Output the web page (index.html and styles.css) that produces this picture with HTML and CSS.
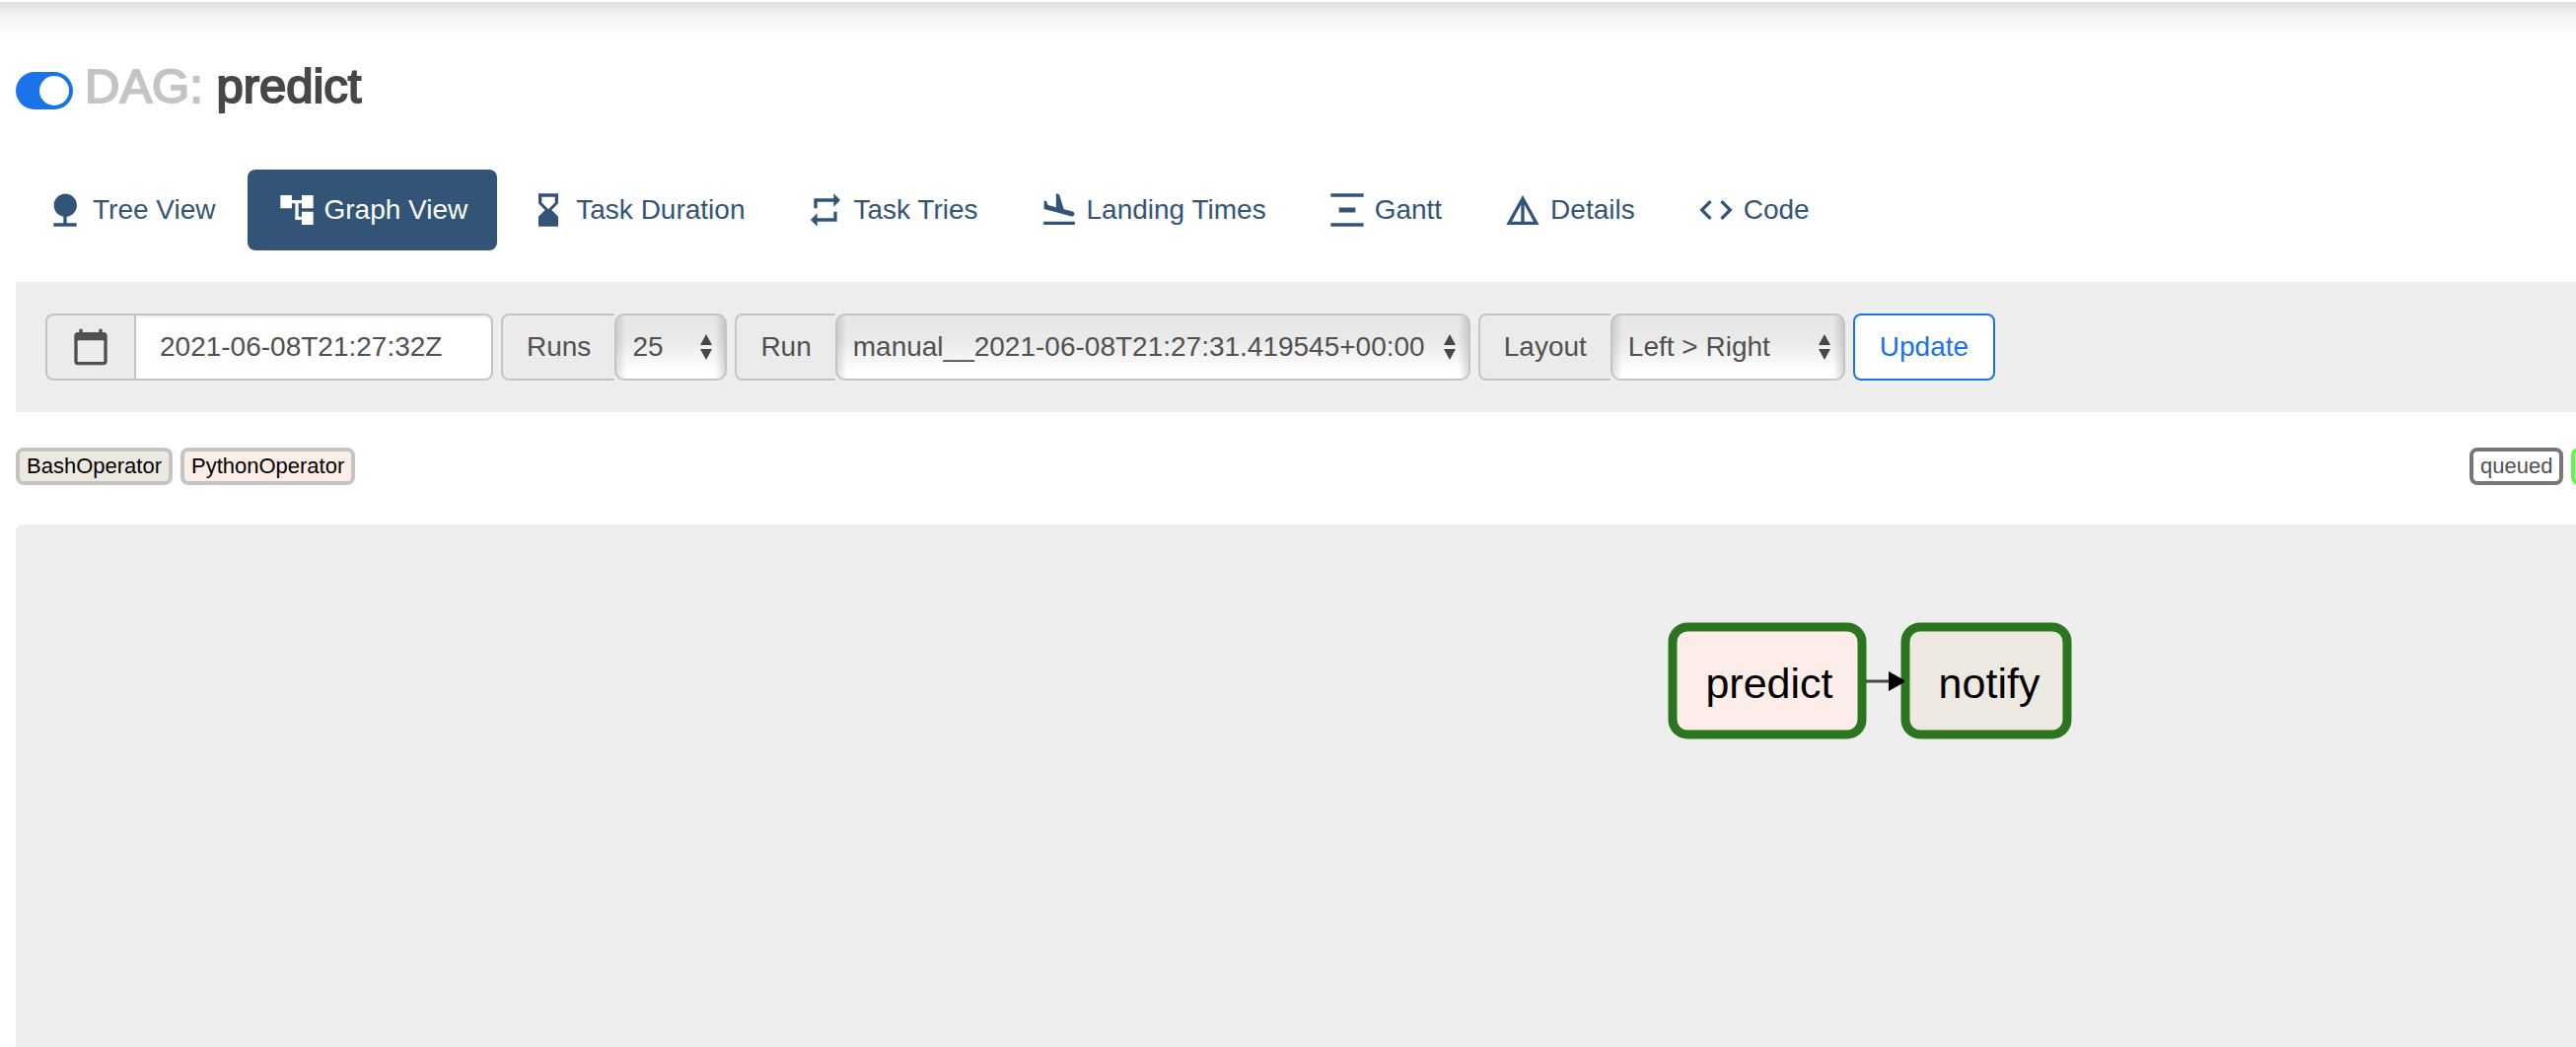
FILE: index.html
```html
<!DOCTYPE html>
<html lang="en">
<head>
<meta charset="utf-8">
<title>predict - Graph View</title>
<link rel="stylesheet" href="styles.css">
</head>
<body>
<div class="top-shadow"></div>
<main class="page">
  <header class="dag-header">
    <input class="toggle" type="checkbox" id="paused" aria-label="DAG enabled" checked>
    <h1 class="dag-title"><span class="muted">DAG:</span> predict</h1>
  </header>

  <nav class="tabs">
    <a class="tab" href="#tree"><svg class="icon" viewBox="0 0 24 24"><path d="M13 16.12c3.47-.41 6.17-3.36 6.17-6.95 0-3.87-3.13-7-7-7s-7 3.13-7 7c0 3.47 2.52 6.34 5.83 6.89V20H5v2h14v-2h-6v-3.88z"/></svg>Tree View</a>
    <a class="tab active" href="#graph"><svg class="icon" viewBox="0 0 24 24"><path d="M22 11V3h-7v3H9V3H2v8h7V8h2v10h4v3h7v-8h-7v3h-2V8h2v3z"/></svg>Graph View</a>
    <a class="tab" href="#duration"><svg class="icon" viewBox="0 0 24 24"><path fill-rule="evenodd" d="M18 22l-.01-6L14 12l3.99-4.01L18 2H6v6l4 4-4 3.99V22h12zM8 7.5V4h8v3.5l-4 4-4-4z"/></svg>Task Duration</a>
    <a class="tab" href="#tries"><svg class="icon" viewBox="0 0 24 24"><path d="M7 7h10v3l4-4-4-4v3H5v6h2V7zm10 10H7v-3l-4 4 4 4v-3h12v-6h-2v4z"/></svg>Task Tries</a>
    <a class="tab" href="#landing"><svg class="icon" viewBox="0 0 24 24"><path d="M2.5 19h19v2h-19v-2zm7.18-5.73l4.35 1.16 5.31 1.42c.8.21 1.62-.26 1.84-1.06.21-.8-.26-1.62-1.06-1.84l-5.31-1.42-2.76-9.02L10.12 2v8.28L5.15 8.95l-.93-2.32-1.45-.39v5.17l1.6.43 5.31 1.43z"/></svg>Landing Times</a>
    <a class="tab" href="#gantt"><svg class="icon" viewBox="0 0 24 24"><path d="M22 2v2H2V2h20zM7 10.5v3h10v-3H7zM2 20v2h20v-2H2z"/></svg>Gantt</a>
    <a class="tab" href="#details"><svg class="icon" viewBox="0 0 24 24"><path d="M12 3L2 21h20L12 3zm1 5.92L18.6 19H13V8.92zm-2 0V19H5.4L11 8.92z"/></svg>Details</a>
    <a class="tab" href="#code"><svg class="icon" viewBox="0 0 24 24"><path d="M9.4 16.6L4.8 12l4.6-4.6L8 6l-6 6 6 6 1.4-1.4zm5.2 0l4.6-4.6-4.6-4.6L16 6l6 6-6 6-1.4-1.4z"/></svg>Code</a>
  </nav>

  <form class="filters">
    <div class="group">
      <label class="addon addon-icon" for="base-date" aria-label="Base date"><svg class="icon" viewBox="0 0 24 24"><path d="M20 3h-1V1h-2v2H7V1H5v2H4c-1.1 0-2 .9-2 2v16c0 1.1.9 2 2 2h16c1.1 0 2-.9 2-2V5c0-1.1-.9-2-2-2zm0 18H4V8h16v13z"/></svg></label>
      <input class="date" id="base-date" type="text" value="2021-06-08T21:27:32Z">
    </div>
    <div class="group">
      <label class="addon" for="runs">Runs</label>
      <span class="picker picker-runs"><select id="runs"><option>25</option></select><svg class="arrows" viewBox="0 0 14 26"><path d="M7 0l6 11H1zM7 26l6-11H1z"/></svg></span>
    </div>
    <div class="group">
      <label class="addon" for="run">Run</label>
      <span class="picker picker-run"><select id="run"><option>manual__2021-06-08T21:27:31.419545+00:00</option></select><svg class="arrows" viewBox="0 0 14 26"><path d="M7 0l6 11H1zM7 26l6-11H1z"/></svg></span>
    </div>
    <div class="group">
      <label class="addon" for="layout">Layout</label>
      <span class="picker picker-layout"><select id="layout"><option>Left &gt; Right</option></select><svg class="arrows" viewBox="0 0 14 26"><path d="M7 0l6 11H1zM7 26l6-11H1z"/></svg></span>
    </div>
    <button class="update" type="button">Update</button>
  </form>

  <div class="legend">
    <span class="badge bash">BashOperator</span>
    <span class="badge python">PythonOperator</span>
    <div class="states">
      <span class="badge queued">queued</span>
      <span class="badge running"></span>
    </div>
  </div>

  <section class="canvas">
    <svg class="graph" width="412" height="122" viewBox="0 0 412 122">
      <rect class="node python-node" x="5" y="5" width="192" height="109" rx="15"/>
      <rect class="node bash-node" x="241" y="5" width="164" height="109" rx="15"/>
      <path class="edge" d="M201 60h26"/>
      <path d="M224 50l16 9v2l-16 9z"/>
      <text x="103" y="77">predict</text>
      <text x="326" y="77">notify</text>
    </svg>
  </section>
</main>
</body>
</html>
```
FILE: styles.css
```css
* {
  box-sizing: border-box;
}

body {
  margin: 0;
  background: #fff;
  color: #51504f;
  font-family: "Liberation Sans", Arial, sans-serif;
  font-size: 28px;
  line-height: 40px;
}

.top-shadow {
  height: 40px;
  border-top: 2px solid #fff;
  background: linear-gradient(#e0e0e0, #ebebeb 20%, #f7f7f7 50%, #fdfdfd 80%, #fff);
}

.page {
  display: flex;
  flex-direction: column;
  min-height: calc(100vh - 40px);
  padding-left: 16px;
  overflow: hidden;
}

.dag-header {
  display: flex;
  align-items: center;
  gap: 12px;
  height: 104px;
  padding: 28px 0 38px;
  margin-bottom: 28px;
}

.toggle {
  appearance: none;
  width: 58px;
  height: 38px;
  margin: 10px 0 0;
  padding: 4px;
  border-radius: 19px;
  background: #1a73e8;
}

.toggle::before {
  content: "";
  display: block;
  width: 30px;
  height: 30px;
  border-radius: 50%;
  background: #fff;
}

.toggle:checked::before {
  margin-left: 20px;
}

.dag-title {
  margin: 0;
  color: #474747;
  font-size: 49px;
  font-weight: 400;
  line-height: 52px;
  -webkit-text-stroke: 2px currentColor;
}

.muted {
  color: #c4c4c4;
}

.tabs {
  display: flex;
  gap: 2px;
  margin-bottom: 32px;
}

.tab {
  display: flex;
  align-items: center;
  gap: 8px;
  height: 82px;
  padding: 0 30px;
  border-radius: 8px;
  color: #325476;
  text-decoration: none;
  white-space: nowrap;
}

.tab.active {
  background: #325476;
  color: #fff;
}

.icon {
  flex: none;
  width: 40px;
  height: 40px;
  fill: currentColor;
}

.filters {
  display: flex;
  gap: 8px;
  height: 132px;
  padding: 32px 30px;
  background: #eee;
}

.group {
  display: flex;
}

.addon {
  display: flex;
  align-items: center;
  padding: 0 24px;
  border: 2px solid #c4c4c4;
  border-right: 0;
  border-radius: 8px 0 0 8px;
  background: #ebebeb;
}

.addon-icon {
  width: 90px;
}

.date {
  width: 364px;
  padding: 0 24px;
  border: 2px solid #c4c4c4;
  border-radius: 0 8px 8px 0;
  background: #fff;
  box-shadow: inset 0 2px 3px rgba(0, 0, 0, 0.08);
  color: #51504f;
  font: inherit;
}

.picker {
  position: relative;
  display: flex;
}

.picker select {
  appearance: none;
  width: 100%;
  padding: 0 16px;
  border: 2px solid #c4c4c4;
  border-radius: 10px;
  background:
    linear-gradient(90deg, rgba(0, 0, 0, 0.12), transparent 10px),
    linear-gradient(270deg, rgba(0, 0, 0, 0.14), transparent 10px),
    linear-gradient(#e6e6e6, #eaeaea 40%, #fff 90%);
  color: #51504f;
  font: inherit;
}

.picker-runs {
  width: 114px;
}

.picker-run {
  width: 644px;
}

.picker-layout {
  width: 238px;
}

.arrows {
  position: absolute;
  top: 21px;
  right: 14px;
  width: 14px;
  height: 26px;
  fill: #474747;
  pointer-events: none;
}

.update {
  padding: 0 25px;
  border: 2px solid #1a73e8;
  border-radius: 8px;
  background: #fff;
  color: #1a73e8;
  font: inherit;
}

.legend {
  display: flex;
  gap: 8px;
  margin: 36px 0 40px;
  font-size: 22px;
  line-height: 30px;
}

.badge {
  flex: none;
  height: 38px;
  padding: 0 7px;
  border: 4px solid #c4c4c4;
  border-radius: 8px;
  color: #000;
}

.bash {
  background: #eee9e0;
}

.python {
  background: #fcede8;
}

.states {
  display: flex;
  gap: 8px;
  width: 108px;
  margin-left: auto;
}

.queued {
  border-color: #777;
  color: #51504f;
}

.running {
  width: 92px;
  border-color: #5cf93c;
}

.canvas {
  position: relative;
  flex: 1;
  min-height: 320px;
  border-top-left-radius: 8px;
  background: #eee;
}

.graph {
  position: absolute;
  top: 99px;
  left: 1675px;
}

.node {
  stroke: #2b7520;
  stroke-width: 9px;
}

.python-node {
  fill: #fcede8;
}

.bash-node {
  fill: #eee9e0;
}

.edge {
  stroke: #474747;
  stroke-width: 3px;
}

.graph text {
  font-size: 43px;
  text-anchor: middle;
}
```
